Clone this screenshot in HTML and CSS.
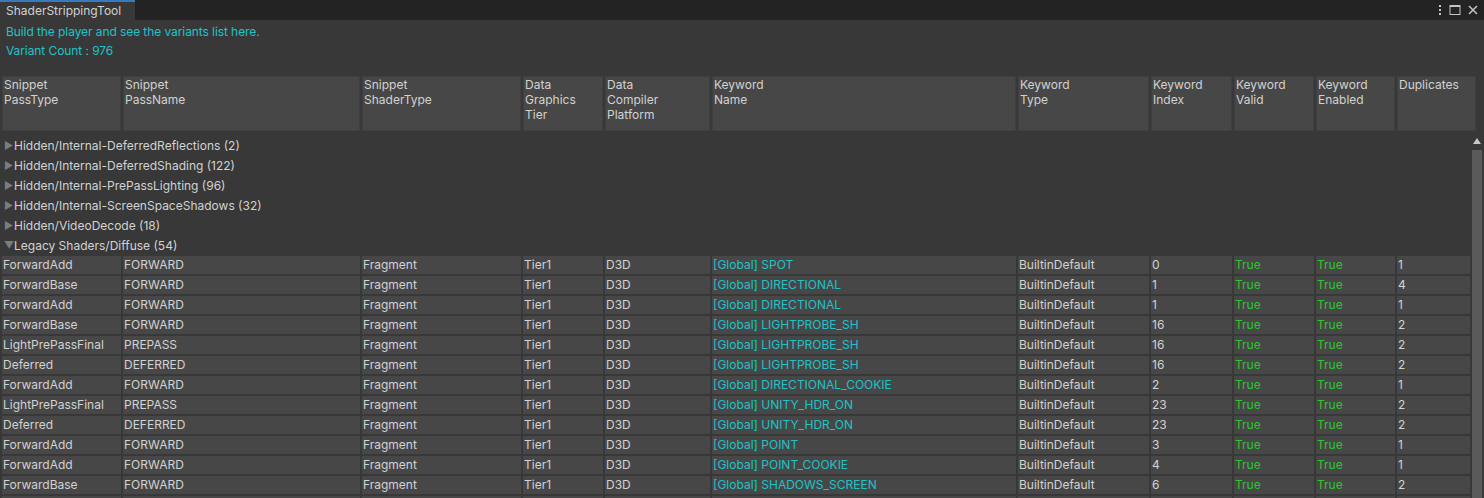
FILE: index.html
```html
<!DOCTYPE html>
<html>
<head>
<meta charset="utf-8">
<link rel="stylesheet" href="styles.css">
</head>
<body>
<div class="window">
  <div class="tabbar">
    <div class="tab">ShaderStrippingTool</div>
    <div class="tabicons">
      <svg width="6" height="14" viewBox="0 0 6 14"><rect x="2" y="2" width="2" height="2" fill="#c4c4c4"/><rect x="2" y="6" width="2" height="2" fill="#c4c4c4"/><rect x="2" y="10" width="2" height="2" fill="#c4c4c4"/></svg>
      <svg width="12" height="12" viewBox="0 0 12 12"><rect x="1" y="1.5" width="10" height="9" fill="none" stroke="#c4c4c4" stroke-width="1"/><rect x="1" y="1" width="10" height="2" fill="#c4c4c4"/></svg>
      <svg width="12" height="12" viewBox="0 0 12 12"><path d="M2 2 L10 10 M10 2 L2 10" stroke="#c4c4c4" stroke-width="1.5"/></svg>
    </div>
  </div>
  <div class="info">
    <div class="msg">Build the player and see the variants list here.</div>
    <div class="msg">Variant Count : 976</div>
  </div>
  <div class="header">
    <div class="hcell">Snippet<br>PassType</div>
    <div class="hcell">Snippet<br>PassName</div>
    <div class="hcell">Snippet<br>ShaderType</div>
    <div class="hcell">Data<br>Graphics<br>Tier</div>
    <div class="hcell">Data<br>Compiler<br>Platform</div>
    <div class="hcell">Keyword<br>Name</div>
    <div class="hcell">Keyword<br>Type</div>
    <div class="hcell">Keyword<br>Index</div>
    <div class="hcell">Keyword<br>Valid</div>
    <div class="hcell">Keyword<br>Enabled</div>
    <div class="hcell">Duplicates</div>
  </div>
  <div class="body">
    <div class="list">
      <div class="tree"><span class="arrow">&#9654;</span>Hidden/Internal-DeferredReflections (2)</div>
      <div class="tree"><span class="arrow">&#9654;</span>Hidden/Internal-DeferredShading (122)</div>
      <div class="tree"><span class="arrow">&#9654;</span>Hidden/Internal-PrePassLighting (96)</div>
      <div class="tree"><span class="arrow">&#9654;</span>Hidden/Internal-ScreenSpaceShadows (32)</div>
      <div class="tree"><span class="arrow">&#9654;</span>Hidden/VideoDecode (18)</div>
      <div class="tree"><span class="arrow down">&#9660;</span>Legacy Shaders/Diffuse (54)</div>

      <div class="row"><div>ForwardAdd</div><div>FORWARD</div><div>Fragment</div><div>Tier1</div><div>D3D</div><div class="kw">[Global] SPOT</div><div>BuiltinDefault</div><div>0</div><div class="ok">True</div><div class="ok">True</div><div>1</div></div>
      <div class="row"><div>ForwardBase</div><div>FORWARD</div><div>Fragment</div><div>Tier1</div><div>D3D</div><div class="kw">[Global] DIRECTIONAL</div><div>BuiltinDefault</div><div>1</div><div class="ok">True</div><div class="ok">True</div><div>4</div></div>
      <div class="row"><div>ForwardAdd</div><div>FORWARD</div><div>Fragment</div><div>Tier1</div><div>D3D</div><div class="kw">[Global] DIRECTIONAL</div><div>BuiltinDefault</div><div>1</div><div class="ok">True</div><div class="ok">True</div><div>1</div></div>
      <div class="row"><div>ForwardBase</div><div>FORWARD</div><div>Fragment</div><div>Tier1</div><div>D3D</div><div class="kw">[Global] LIGHTPROBE_SH</div><div>BuiltinDefault</div><div>16</div><div class="ok">True</div><div class="ok">True</div><div>2</div></div>
      <div class="row"><div>LightPrePassFinal</div><div>PREPASS</div><div>Fragment</div><div>Tier1</div><div>D3D</div><div class="kw">[Global] LIGHTPROBE_SH</div><div>BuiltinDefault</div><div>16</div><div class="ok">True</div><div class="ok">True</div><div>2</div></div>
      <div class="row"><div>Deferred</div><div>DEFERRED</div><div>Fragment</div><div>Tier1</div><div>D3D</div><div class="kw">[Global] LIGHTPROBE_SH</div><div>BuiltinDefault</div><div>16</div><div class="ok">True</div><div class="ok">True</div><div>2</div></div>
      <div class="row"><div>ForwardAdd</div><div>FORWARD</div><div>Fragment</div><div>Tier1</div><div>D3D</div><div class="kw">[Global] DIRECTIONAL_COOKIE</div><div>BuiltinDefault</div><div>2</div><div class="ok">True</div><div class="ok">True</div><div>1</div></div>
      <div class="row"><div>LightPrePassFinal</div><div>PREPASS</div><div>Fragment</div><div>Tier1</div><div>D3D</div><div class="kw">[Global] UNITY_HDR_ON</div><div>BuiltinDefault</div><div>23</div><div class="ok">True</div><div class="ok">True</div><div>2</div></div>
      <div class="row"><div>Deferred</div><div>DEFERRED</div><div>Fragment</div><div>Tier1</div><div>D3D</div><div class="kw">[Global] UNITY_HDR_ON</div><div>BuiltinDefault</div><div>23</div><div class="ok">True</div><div class="ok">True</div><div>2</div></div>
      <div class="row"><div>ForwardAdd</div><div>FORWARD</div><div>Fragment</div><div>Tier1</div><div>D3D</div><div class="kw">[Global] POINT</div><div>BuiltinDefault</div><div>3</div><div class="ok">True</div><div class="ok">True</div><div>1</div></div>
      <div class="row"><div>ForwardAdd</div><div>FORWARD</div><div>Fragment</div><div>Tier1</div><div>D3D</div><div class="kw">[Global] POINT_COOKIE</div><div>BuiltinDefault</div><div>4</div><div class="ok">True</div><div class="ok">True</div><div>1</div></div>
      <div class="row"><div>ForwardBase</div><div>FORWARD</div><div>Fragment</div><div>Tier1</div><div>D3D</div><div class="kw">[Global] SHADOWS_SCREEN</div><div>BuiltinDefault</div><div>6</div><div class="ok">True</div><div class="ok">True</div><div>2</div></div>
      <div class="row"><div></div><div></div><div></div><div></div><div></div><div></div><div></div><div></div><div></div><div></div><div></div></div>
    </div>
    <div class="scrollbar">
      <div class="uparrow"></div>
      <div class="thumb"></div>
    </div>
  </div>
</div>
</body>
</html>
```
FILE: styles.css
```css
html, body {
  margin: 0;
  padding: 0;
  background: #383838;
  overflow: hidden;
}
.window {
  width: 1484px;
  height: 498px;
  overflow: hidden;
  font-family: Inter, "Liberation Sans", sans-serif;
  font-size: 12px;
  color: #d2d2d2;
  background: #383838;
}
.tabbar {
  height: 20px;
  background: #232323;
  display: flex;
  align-items: stretch;
  justify-content: space-between;
}
.tab {
  width: 135px;
  padding-left: 6px;
  background: #383838;
  border-top: 2px solid #3a79bb;
  line-height: 18px;
  color: #d2d2d2;
  box-sizing: border-box;
}
.tabicons {
  display: flex;
  align-items: center;
  gap: 6px;
  padding-right: 5px;
}
.info {
  padding: 2px 0 0 6px;
  height: 54px;
}
.msg {
  color: #20c2c8;
  line-height: 19px;
  letter-spacing: -0.08px;
}
.header {
  display: grid;
  grid-template-columns: 119px 237px 159px 80px 105px 304px 131px 81px 80px 79px 79px;
  column-gap: 2px;
  padding-left: 2px;
  height: 55px;
}
.hcell {
  background: #474747;
  border: 1px solid #3f3f3f;
  padding: 0 0 0 1px;
  line-height: 15px;
  overflow: hidden;
}
.body {
  display: flex;
  margin-top: 5px;
}
.list {
  width: 1470px;
}
.tree {
  height: 20px;
  line-height: 20px;
  padding-left: 4px;
  white-space: nowrap;
}
.arrow {
  display: inline-block;
  width: 10px;
  font-size: 10px;
  color: #7c7c7c;
  vertical-align: top;
  line-height: 19px;
}
.row {
  display: grid;
  grid-template-columns: 119px 237px 159px 80px 105px 304px 131px 81px 80px 79px 73px;
  column-gap: 2px;
  padding-left: 2px;
  margin-bottom: 2px;
}
.row > div {
  background: #474747;
  height: 18px;
  line-height: 18px;
  padding-left: 1px;
  white-space: nowrap;
  overflow: hidden;
}
.row > .kw {
  color: #20c2c8;
}
.row > .ok {
  color: #2ec62e;
}
.scrollbar {
  width: 10px;
  margin-left: 2px;
  display: flex;
  flex-direction: column;
  align-items: center;
}
.uparrow {
  width: 0;
  height: 0;
  margin-top: 2px;
  border-left: 4px solid transparent;
  border-right: 4px solid transparent;
  border-bottom: 6px solid #c8c8c8;
}
.thumb {
  margin-top: 6px;
  width: 10px;
  height: 400px;
  background: #5a5a5a;
}
```
